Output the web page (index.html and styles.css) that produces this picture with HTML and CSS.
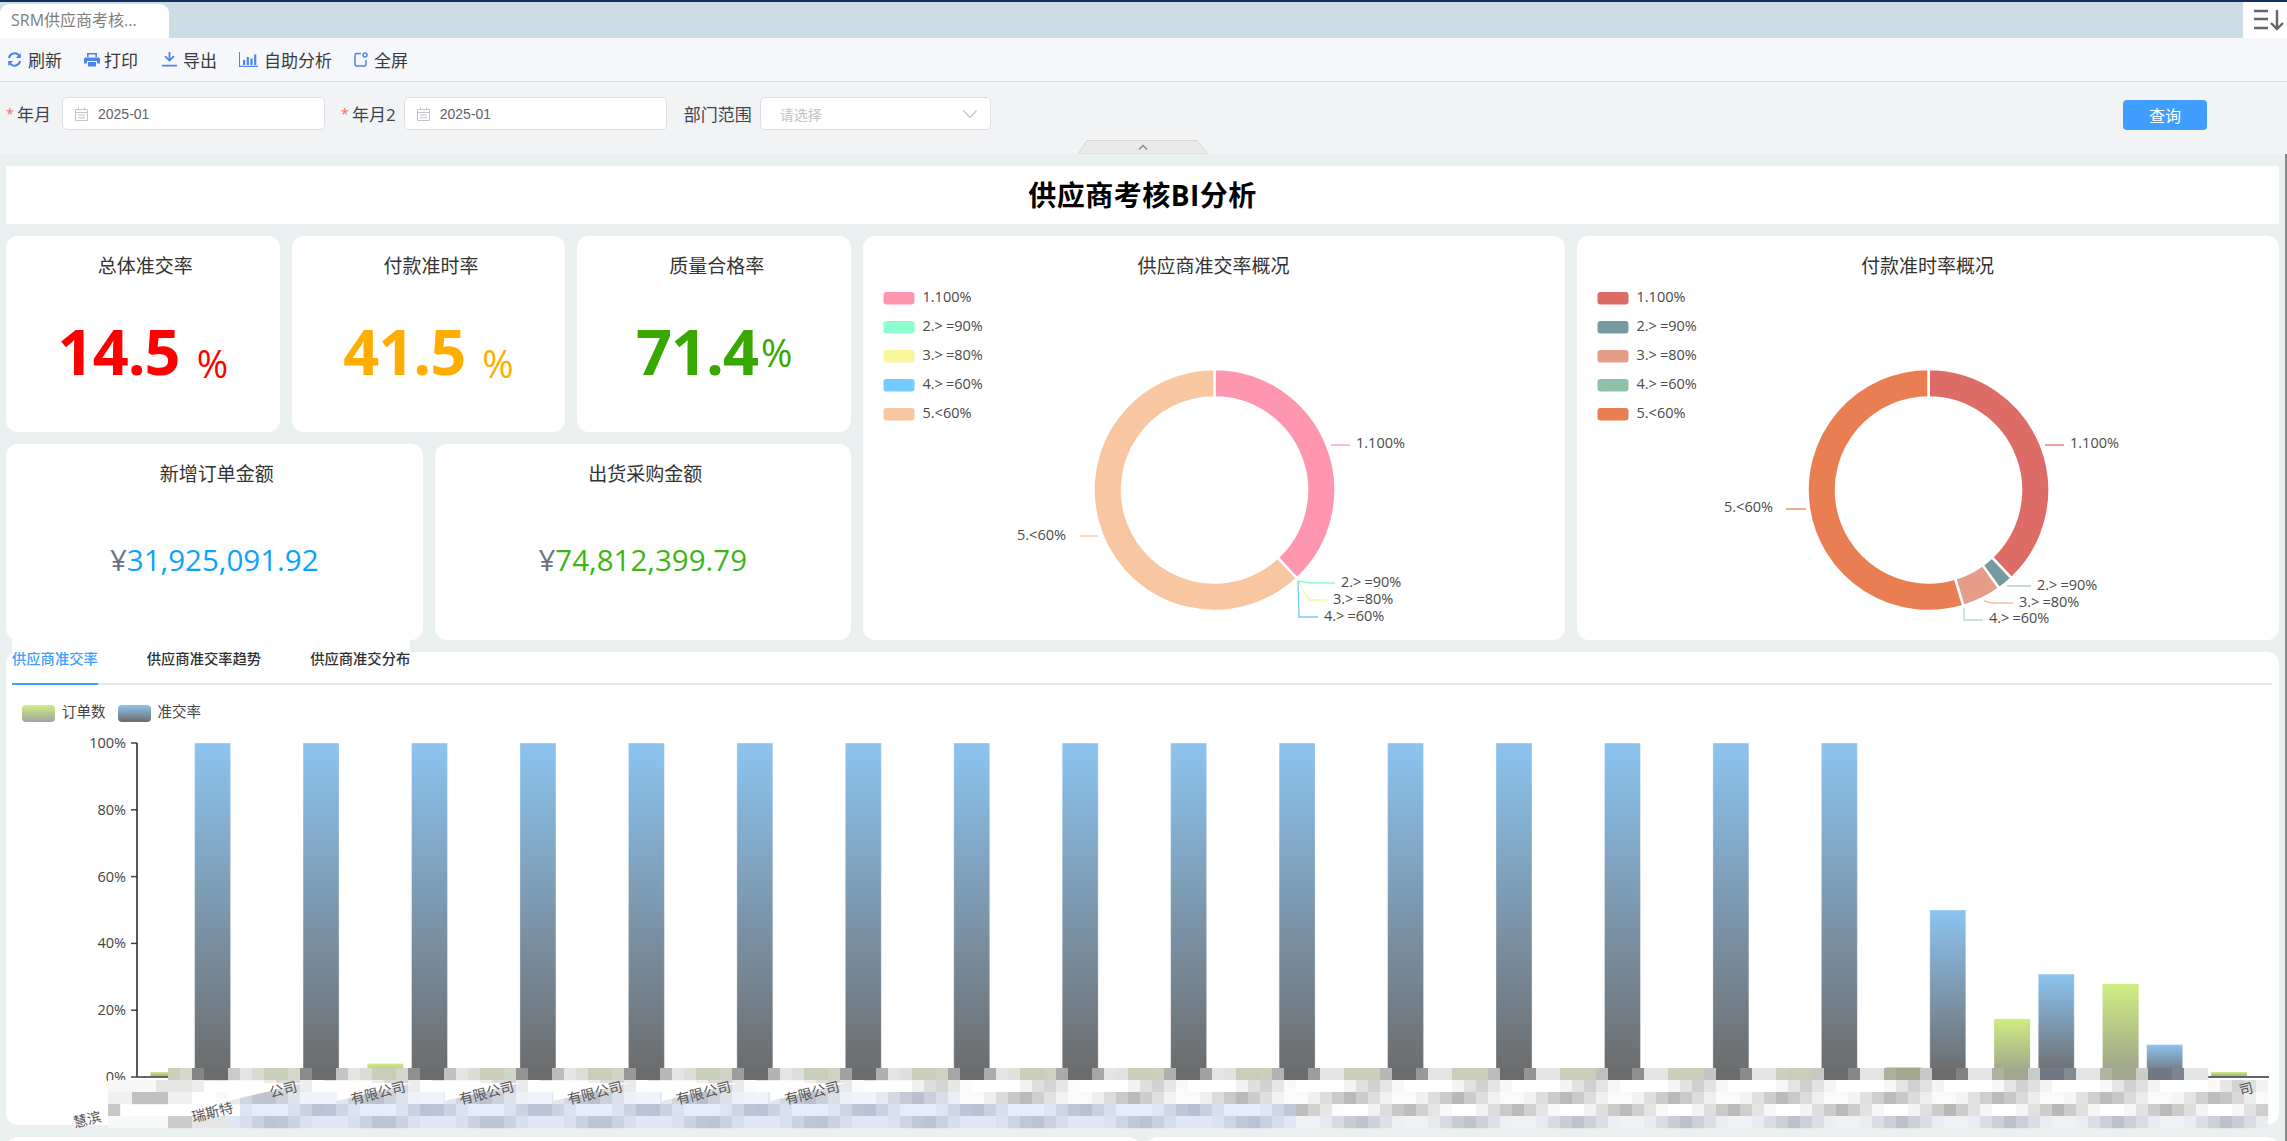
FILE: index.html
```html
<!DOCTYPE html>
<html lang="zh">
<head>
<meta charset="utf-8">
<title>供应商考核BI分析</title>
<link rel="stylesheet" href="styles.css">
</head>
<body>
<div class="page">
  <div class="tabstrip">
    <div class="tab">SRM供应商考核...</div>
    <div class="strip-menu">
      <svg viewBox="0 0 32 24" width="32" height="24"><g fill="none" stroke="#666" stroke-width="2.4"><path d="M1 3h14M1 11h14M1 20h14"/><path d="M24 2v19M18 15l6 6 6-6"/></g></svg>
    </div>
  </div>
  <div class="toolbar">
    <div class="tool">
      <svg class="ico" viewBox="0 0 15 15" width="15" height="15"><g fill="none" stroke="#4a86e8" stroke-width="2"><path d="M2 6a5.7 5.7 0 0 1 10-2.600"/><path d="M13 9a5.700 5.700 0 0 1-10 2.600"/></g><path fill="#4a86e8" d="M13.800 1v5h-5zM1.200 14V9h5z"/></svg>
      <span>刷新</span>
    </div>
    <div class="tool tool-print">
      <svg class="ico" viewBox="0 0 16 15" width="16" height="15"><path fill="#4a86e8" d="M3 1h10v4h-1.600V2.500H4.600V5H3zM1.500 5.500h13a1.500 1.500 0 0 1 1.500 1.500v4.500h-3V9H3v2.500H0V7a1.500 1.500 0 0 1 1.500-1.500zM4 10h8v4.500H4z"/></svg>
      <span>打印</span>
    </div>
    <div class="tool">
      <svg class="ico" viewBox="0 0 15 15" width="15" height="15"><path fill="#4a86e8" d="M6.600 0h1.800v6.500l3-3 1.200 1.200-5.100 5.100-5.100-5.100 1.200-1.200 3 3zM0 12.800h15v1.700H0z"/></svg>
      <span>导出</span>
    </div>
    <div class="tool">
      <svg class="ico" viewBox="0 0 19 15" width="19" height="15"><path fill="#4a86e8" d="M0 0h1v13.800h19V15H0zM4 8h2.200v5H4zM7.700 5h2.200v8H7.700zM11.400 6.500h2.200V13h-2.200zM15.100 2.500h2.200V13h-2.200z"/></svg>
      <span>自助分析</span>
    </div>
    <div class="tool">
      <svg class="ico" viewBox="0 0 14 15" width="14" height="15"><path fill="none" stroke="#4a86e8" stroke-width="1.500" d="M7 1.500H2.500a1.500 1.500 0 0 0-1.500 1.500v9.500a1.500 1.500 0 0 0 1.500 1.500h8a1.500 1.500 0 0 0 1.500-1.500V8"/><circle cx="11" cy="3" r="2" fill="none" stroke="#4a86e8" stroke-width="1.500"/></svg>
      <span>全屏</span>
    </div>
  </div>
  <div class="filters">
    <label class="field"><i class="star">*</i><span>年月</span>
      <div class="input date">
        <svg class="cal" viewBox="0 0 13 14" width="13" height="14"><path fill="none" stroke="#c0c4cc" stroke-width="1" d="M.5 2.500h12v11H.5zM.5 5.500h12M3.500.5v2M9.500.5v2M3 8h7M3 10.800h7"/></svg>
        <span>2025-01</span>
      </div>
    </label>
    <label class="field field-tight"><i class="star">*</i><span>年月2</span>
      <div class="input date">
        <svg class="cal" viewBox="0 0 13 14" width="13" height="14"><path fill="none" stroke="#c0c4cc" stroke-width="1" d="M.5 2.500h12v11H.5zM.5 5.500h12M3.500.5v2M9.500.5v2M3 8h7M3 10.800h7"/></svg>
        <span>2025-01</span>
      </div>
    </label>
    <label class="field field-plain"><span>部门范围</span>
      <div class="input select">
        <span class="placeholder">请选择</span>
        <svg viewBox="0 0 14 8" width="14" height="8"><path fill="none" stroke="#c0c4cc" stroke-width="1.200" d="M.5.5 7 7.500 13.500.5"/></svg>
      </div>
    </label>
    <button class="query" type="button">查询</button>
    <div class="collapse">
      <svg viewBox="0 0 130 14" width="130" height="14"><path d="M0 14 9 .5h110l11 13.500z" fill="#e9e9e9" stroke="#d6d6d6"/><path d="M61 9.500l4-4 4 4" fill="none" stroke="#888" stroke-width="1.400"/></svg>
    </div>
  </div>
  <div class="main">
    <div class="report-title">供应商考核BI分析</div>
    <div class="overview">
      <div class="kpi-stack">
        <div class="kpi-row">
          <div class="card kpi">
            <div class="card-title">总体准交率</div>
            <div class="rate rate-red">14.5<small class="pct">%</small></div>
          </div>
          <div class="card kpi">
            <div class="card-title">付款准时率</div>
            <div class="rate rate-orange">41.5<small class="pct">%</small></div>
          </div>
          <div class="card kpi">
            <div class="card-title">质量合格率</div>
            <div class="rate rate-green">71.4<small class="pct pct-up">%</small></div>
          </div>
        </div>
        <div class="kpi-row">
          <div class="card kpi">
            <div class="card-title">新增订单金额</div>
            <div class="money money-blue"><span class="yen">¥</span>31,925,091.92</div>
          </div>
          <div class="card kpi">
            <div class="card-title">出货采购金额</div>
            <div class="money money-green"><span class="yen">¥</span>74,812,399.79</div>
          </div>
        </div>
      </div>
      <div class="card donut-card"><svg id="donut1" class="donut" viewBox="863 236 702 404"></svg></div>
      <div class="card donut-card"><svg id="donut2" class="donut" viewBox="1577 236 702 404"></svg></div>
    </div>
    <div class="panel">
      <div class="tabnav">
        <div class="tabitem active">供应商准交率</div>
        <div class="tabitem">供应商准交率趋势</div>
        <div class="tabitem">供应商准交分布</div>
      </div>
      <div class="legend">
        <i class="swatch swatch-green"></i><span>订单数</span>
        <i class="swatch swatch-blue"></i><span>准交率</span>
      </div>
      <svg id="bars" class="bars" viewBox="6 722 2273 403">
        <defs>
          <linearGradient id="gBlue" x1="0" y1="0" x2="0" y2="1"><stop offset="0" stop-color="#8cc4f0"/><stop offset="1" stop-color="#6b6b6b"/></linearGradient>
          <linearGradient id="gGreen" x1="0" y1="0" x2="0" y2="1"><stop offset="0" stop-color="#cfed82"/><stop offset="1" stop-color="#9c9f8c"/></linearGradient>
        </defs>
      </svg>
    </div>
    <div class="next-panel"></div>
    <div class="next-notch"></div>
    <div class="scroll-thumb"></div>
  </div>
</div>
<script src="chart.js"></script>
</body>
</html>
```

FILE: styles.css
```css
* { box-sizing: border-box; }
html, body { margin: 0; padding: 0; }
body {
  width: 2287px;
  height: 1141px;
  overflow: hidden;
  background: #eaf0f0;
  color: #333;
  font-family: "Open Sans", "Noto Sans CJK SC", sans-serif;
}
.page { display: flex; flex-direction: column; height: 1141px; }

.tabstrip {
  display: flex;
  justify-content: space-between;
  height: 38px;
  background: #cddde6;
  border-top: 2px solid #12305a;
  flex: none;
}
.tab {
  width: 169px;
  margin-top: 2px;
  padding: 0 0 0 11px;
  line-height: 32px;
  font-size: 16px;
  color: #7d7d7d;
  background: #fff;
  border-radius: 9px 9px 0 0;
  white-space: nowrap;
}
.strip-menu {
  width: 44px;
  background: #fff;
  padding: 6px 0 0 10px;
}
.strip-menu svg { display: block; }

.toolbar {
  display: flex;
  align-items: center;
  height: 44px;
  padding-left: 7px;
  background: #f5f7fb;
  border-bottom: 1px solid #dcdfe2;
  flex: none;
  font-size: 17px;
  color: #3a3a3a;
}
.tool { display: flex; align-items: center; gap: 6px; margin-right: 22px; }
.tool-print { gap: 4px; margin-right: 24px; }
.ico { display: block; }

.filters {
  position: relative;
  display: flex;
  align-items: flex-start;
  height: 72px;
  padding: 15px 0 0 6px;
  background: #f1f3f4;
  flex: none;
  font-size: 17px;
  color: #3d4450;
}
.field { display: flex; align-items: center; height: 33px; margin-right: 16px; }
.field-plain { margin-right: 0; margin-left: 1px; }
.star { width: 11px; font-style: normal; font-size: 14px; color: #f56c6c; }
.field > span { margin-right: 11px; white-space: nowrap; }
.field-tight > span { margin-right: 8px; }
.field-plain > span { margin-right: 8px; }
.input {
  display: flex;
  align-items: center;
  height: 33px;
  background: #fff;
  border: 1px solid #dcdfe6;
  border-radius: 5px;
  font: 14px "Liberation Sans", sans-serif;
  color: #606266;
}
.date { width: 263px; padding-left: 12px; }
.cal { margin-right: 10px; }
.select {
  width: 231px;
  padding: 0 13px 0 19px;
  justify-content: space-between;
}
.placeholder { color: #c0c4cc; font-family: "Noto Sans CJK SC", sans-serif; }
.query {
  width: 84px;
  height: 30px;
  margin: 3px 80px 0 auto;
  border: 0;
  border-radius: 4px;
  background: #409eff;
  color: #fff;
  font: 16px "Noto Sans CJK SC", sans-serif;
  padding: 0;
}
.collapse { position: absolute; left: 1078px; bottom: 0; height: 14px; }
.collapse svg { display: block; }

.main {
  position: relative;
  flex: 1;
  display: flex;
  flex-direction: column;
  padding: 12px 8px 0 6px;
  overflow: hidden;
  background: #eaf0f0;
}
.report-title {
  height: 58px;
  line-height: 58px;
  text-align: center;
  background: #fff;
  font-size: 28px;
  font-weight: 700;
  letter-spacing: .5px;
  color: #000;
  flex: none;
}
.overview { display: flex; gap: 12px; margin-top: 12px; height: 404px; flex: none; }
.kpi-stack { display: flex; flex-direction: column; gap: 12px; width: 845px; flex: none; }
.kpi-row { display: flex; gap: 12px; height: 196px; }
.card { background: #fff; border-radius: 12px; }
.kpi { flex: 1; min-width: 0; display: flex; flex-direction: column; align-items: center; }
.card-title {
  margin-top: 17px;
  padding-left: 5px;
  line-height: 26px;
  font-size: 19px;
  color: #333;
}
.rate {
  margin-top: 27px;
  line-height: 90px;
  font-size: 63px;
  font-weight: 700;
  letter-spacing: -1px;
  white-space: nowrap;
}
.pct {
  margin-left: 17px;
  font-size: 38px;
  font-weight: 400;
  letter-spacing: 0;
  vertical-align: -3px;
}
.pct-up { margin-left: 3px; vertical-align: 8px; }
.rate-red { color: #ff0000; }
.rate-orange { color: #ffae00; }
.rate-green { color: #38a800; }
.money {
  margin-top: 48px;
  line-height: 50px;
  font-size: 29.500px;
  white-space: nowrap;
}
.yen { color: #6b7280; }
.money-blue { color: #0aa2ff; }
.money-green { color: #3cb614; }
.donut-card { flex: 1; min-width: 0; }
.donut { display: block; width: 702px; height: 404px; }
.donut text { font-family: "Open Sans", "Noto Sans CJK SC", sans-serif; }

.panel {
  position: relative;
  height: 473px;
  margin-top: 12px;
  background: #fff;
  border-radius: 12px;
  flex: none;
}
.tabnav {
  position: relative;
  display: flex;
  gap: 49px;
  height: 33px;
  margin: 0 7px 0 6px;
  border-bottom: 2px solid #e4e7ed;
  font-size: 14.300px;
  font-weight: 500;
  color: #303133;
}
.tabnav::before {
  content: "";
  position: absolute;
  left: 0;
  top: -16px;
  width: 398px;
  height: 16px;
  background: #fff;
}
.tabitem { height: 33px; line-height: 14px; white-space: nowrap; }
.tabitem.active { color: #409eff; border-bottom: 2px solid #409eff; }
.legend {
  display: flex;
  align-items: center;
  margin-top: 20px;
  padding-left: 16px;
  height: 17px;
  font-size: 14.500px;
  color: #444;
}
.swatch { width: 33px; height: 17px; border-radius: 4px; margin-right: 7px; }
.legend span { margin: 0 12px 6px 0; }
.swatch-green { background: linear-gradient(#cfed82, #a3a3a3); }
.swatch-blue { background: linear-gradient(#8cc4f0, #6b6b6b); }
.bars { display: block; width: 2273px; height: 403px; overflow: visible; }
.bars text { font-family: "Open Sans", "Noto Sans CJK SC", sans-serif; }
.next-panel {
  height: 20px;
  margin-top: 12px;
  background: #fff;
  border-radius: 12px 12px 0 0;
  flex: none;
}
.next-notch {
  position: absolute;
  left: 1130px;
  bottom: 0;
  width: 26px;
  height: 4px;
  background: #eaf0f0;
  clip-path: polygon(0 0, 100% 0, 70% 100%, 30% 100%);
}
.scroll-thumb {
  position: absolute;
  right: 0;
  top: 0;
  bottom: 0;
  width: 2px;
  background: #8a8a8a;
}
```

FILE: chart.js
```js
(function () {
  function polar(cx, cy, r, deg) {
    var a = (deg - 90) * Math.PI / 180;
    return [cx + r * Math.cos(a), cy + r * Math.sin(a)];
  }
  function sector(cx, cy, r0, r1, a0, a1, fill) {
    var large = a1 - a0 > 180 ? 1 : 0;
    var p1 = polar(cx, cy, r1, a0), p2 = polar(cx, cy, r1, a1);
    var p3 = polar(cx, cy, r0, a1), p4 = polar(cx, cy, r0, a0);
    return '<path fill="' + fill + '" stroke="#fff" stroke-width="2.500" stroke-linejoin="round" d="M' + p1 +
      'A' + r1 + ' ' + r1 + ' 0 ' + large + ' 1 ' + p2 + 'L' + p3 +
      'A' + r0 + ' ' + r0 + ' 0 ' + large + ' 0 ' + p4 + 'Z"/>';
  }
  function text(x, y, s, anchor, size, color) {
    var body = s.replace(/</g, '&lt;').replace(/>=/g, '&gt;<tspan dx="3">=</tspan>');
    return '<text x="' + x + '" y="' + y + '" text-anchor="' + (anchor || 'start') + '" font-size="' + (size || 14.5) +
      '" fill="' + (color || '#4a4a4a') + '">' + body + '</text>';
  }
  var names = ['1.100%', '2.>=90%', '3.>=80%', '4.>=60%', '5.<60%'];

  function donut(cfg) {
    var out = text(cfg.titleX, 273, cfg.title, 'middle', 19, '#333');
    names.forEach(function (n, i) {
      var y = 292 + i * 29;
      out += '<rect x="' + cfg.lx + '" y="' + y + '" width="31" height="12.500" rx="3" fill="' + cfg.colors[i] + '"/>';
      out += text(cfg.lx + 39, y + 9.5, n);
    });
    cfg.slices.forEach(function (s) {
      out += sector(cfg.cx, 490, 92.5, 121, s[0], s[1], cfg.colors[s[2]]);
    });
    cfg.lines.forEach(function (l) {
      out += '<polyline fill="none" stroke-width="1.300" stroke="' + l[0] + '" points="' + l[1] + '"/>';
      out += text(l[2], l[3] + 5, l[4]);
    });
    return out;
  }

  var c1 = ['#ff96b0', '#8bfdcf', '#f9f59a', '#73cbff', '#f8c6a0'];
  document.getElementById('donut1').innerHTML = donut({
    title: '供应商准交率概况', titleX: 1213.5, lx: 883.5, cx: 1214.5, colors: c1,
    slices: [[0, 137, 0], [137, 360, 4]],
    lines: [
      [c1[0], '1331,445 1350,445', 1356, 443, names[0]],
      [c1[1], '1298,581 1310,583 1335,583', 1341, 582, names[1]],
      [c1[2], '1298,581 1309,600 1327,600', 1333, 599, names[2]],
      [c1[3], '1298,581 1299,617 1318,617', 1324, 616, names[3]],
      [c1[4], '1098,536 1080,536', 1017, 535, names[4]]
    ]
  });
  var c2 = ['#dd6b66', '#759aa0', '#e69d87', '#8dc1a9', '#ea7e53'];
  document.getElementById('donut2').innerHTML = donut({
    title: '付款准时率概况', titleX: 1927.5, lx: 1597.5, cx: 1928.5, colors: c2,
    slices: [[0, 136.7, 0], [136.7, 144.3, 1], [144.3, 163.3, 2], [163.3, 360, 4]],
    lines: [
      [c2[0], '2045,445 2064,445', 2070, 443, names[0]],
      ['#a5c3c8', '2007,586 2031,586', 2037, 585, names[1]],
      ['#f0bfb0', '1984,601 1993,603 2013,603', 2019, 602, names[2]],
      ['#b8d8c8', '1964,608 1964,620 1983,620', 1989, 618, names[3]],
      [c2[4], '1806,509 1786,509', 1724, 507, names[4]]
    ]
  });

  /* bar chart, drawn in page coordinates */
  var TOP = 743, ZERO = 1077, H = ZERO - TOP, P = 108.45, G0 = 150.5, B0 = 194.6, W = 36;
  var blue = [], green = {0: 1.5, 2: 4, 16: 3, 17: 17.4, 18: 27.9, 19: 1.5};
  for (var b = 0; b < 16; b++) blue[b] = 100;
  blue[16] = 50; blue[17] = 30.8; blue[18] = 9.7;

  var s = '';
  [0, 20, 40, 60, 80, 100].forEach(function (v) {
    var y = ZERO - H * v / 100;
    s += text(126, y + 5, v + '%', 'end', 14.5, '#444');
    s += '<path d="M131 ' + y + 'H137" stroke="#444" stroke-width="1.500"/>';
  });
  s += '<path d="M137 ' + TOP + 'V' + ZERO + '" stroke="#222" stroke-width="1.500"/>';
  Object.keys(green).forEach(function (k) {
    var h = H * green[k] / 100, x = G0 + P * k;
    s += '<rect x="' + x + '" y="' + (ZERO - h) + '" width="' + W + '" height="' + h + '" fill="url(#gGreen)"/>';
  });
  blue.forEach(function (v, i) {
    var h = H * v / 100, x = B0 + P * i;
    s += '<rect x="' + x + '" y="' + (ZERO - h) + '" width="' + W + '" height="' + h + '" fill="url(#gBlue)" stroke="#fff" stroke-opacity=".35"/>';
  });
  s += '<path d="M137 ' + ZERO + 'H2269" stroke="#666" stroke-width="2"/>';

  function label(x, y, t) {
    return '<text transform="translate(' + x + ' ' + y + ') rotate(-14)" text-anchor="end" font-size="14" fill="#555">' + t + '</text>';
  }

  /* the mosaic that covers the category labels: 12px cells */
  function hex(c) { return [parseInt(c.substr(1, 2), 16), parseInt(c.substr(3, 2), 16), parseInt(c.substr(5, 2), 16)]; }
  function mix(a, b, t) {
    var A = hex(a), B = hex(b);
    return 'rgb(' + A.map(function (v, i) { return Math.round(v + (B[i] - v) * t); }).join(',') + ')';
  }
  function mixRgb(a, b, t) {
    return '#' + hex(a).map(function (v, i) {
      var n = Math.round(v + (hex(b)[i] - v) * t).toString(16);
      return n.length < 2 ? '0' + n : n;
    }).join('');
  }
  function cell(x, y, color) { return '<rect x="' + x + '" y="' + y + '" width="12.200" height="12.200" fill="' + color + '"/>'; }
  function wave(x, centre, width) {
    var d = ((x + 6 - centre) % P + P) % P;
    if (d > P / 2) d = P - d;
    return Math.max(0, 1 - d / width);
  }
  function overlap(x, a) { return Math.max(0, Math.min(x + 12, a + W) - Math.max(x, a)) / 12; }

  var x;
  for (x = 168; x < 2208; x += 12) {
    var col = '#e4e4e4', i, f;
    for (i = 0; i < 20; i++) {
      f = overlap(x, G0 + P * i);
      if (f > 0) col = mixRgb(col, i >= 16 ? '#a2a88e' : '#c9ceb8', f);
    }
    for (i = 0; i < 19; i++) {
      f = overlap(x, B0 + P * i);
      if (f > 0) col = mixRgb(col, i > 16 ? '#727985' : '#6c6c6c', f);
    }
    s += cell(x, 1068, col);
  }
  for (x = 108; x < 2268; x += 12) {
    var t2 = wave(x, 288, 30);
    if (x >= 953 || x < 192 || t2 > 0) {
      s += cell(x, 1080, mix(x >= 192 ? '#ffffff' : '#fbfbfb', '#cfcfcf', x >= 192 ? t2 : (x > 150 ? .5 : .1)));
    }
    var tint = x >= 240 && x < 953;
    if (x < 192 || x >= 216) {
      var g3 = x < 192 ? (x >= 132 && x < 168 ? '#c1c1c1' : '#f0f0f0') : mix(tint ? '#eff3fb' : '#fafafa', tint ? '#b7bcc8' : '#b8b8b8', wave(x, 265, 42));
      s += cell(x, 1092, g3);
    }
    if (x < 120) {
      s += cell(x, 1104, x >= 96 ? '#c8c8c8' : '#ffffff');
    } else if (x >= 236) {
      s += cell(x, 1104, x < 1290 ? mix('#e5ecfb', '#b3bccf', wave(x, 323, 38)) : mix('#ffffff', '#b8b8b8', wave(x, 323, 42)));
    }
    if (x >= 108) {
      var c5;
      if (x < 168) c5 = '#f8f9f9';
      else if (x < 192) c5 = '#cccccc';
      else if (x < 228) c5 = '#e6e6e6';
      else if (x < 1290) c5 = mix('#e0e8f8', '#b6bfd3', wave(x, 275, 38));
      else c5 = mix('#eef1f6', '#bcc0c8', wave(x, 275, 40));
      s += cell(x, 1116, c5);
    }
  }
  /* the parts of the axis labels that the blur leaves readable */
  for (var k = 0; k < 6; k++) {
    var end = 298 + P * k;
    s += '<polygon fill="#fff" points="' + (end - 70) + ',1101 ' + (end + 6) + ',1083 ' + (end - 70) + ',1083"/>';
    s += label(end, 1091, k === 0 ? '公司' : '有限公司');
  }
  s += label(102, 1121, '慧滨');
  s += label(234, 1112, '瑞斯特');
  s += label(2254, 1092, '司');
  document.getElementById('bars').insertAdjacentHTML('beforeend', s);
})();
```
